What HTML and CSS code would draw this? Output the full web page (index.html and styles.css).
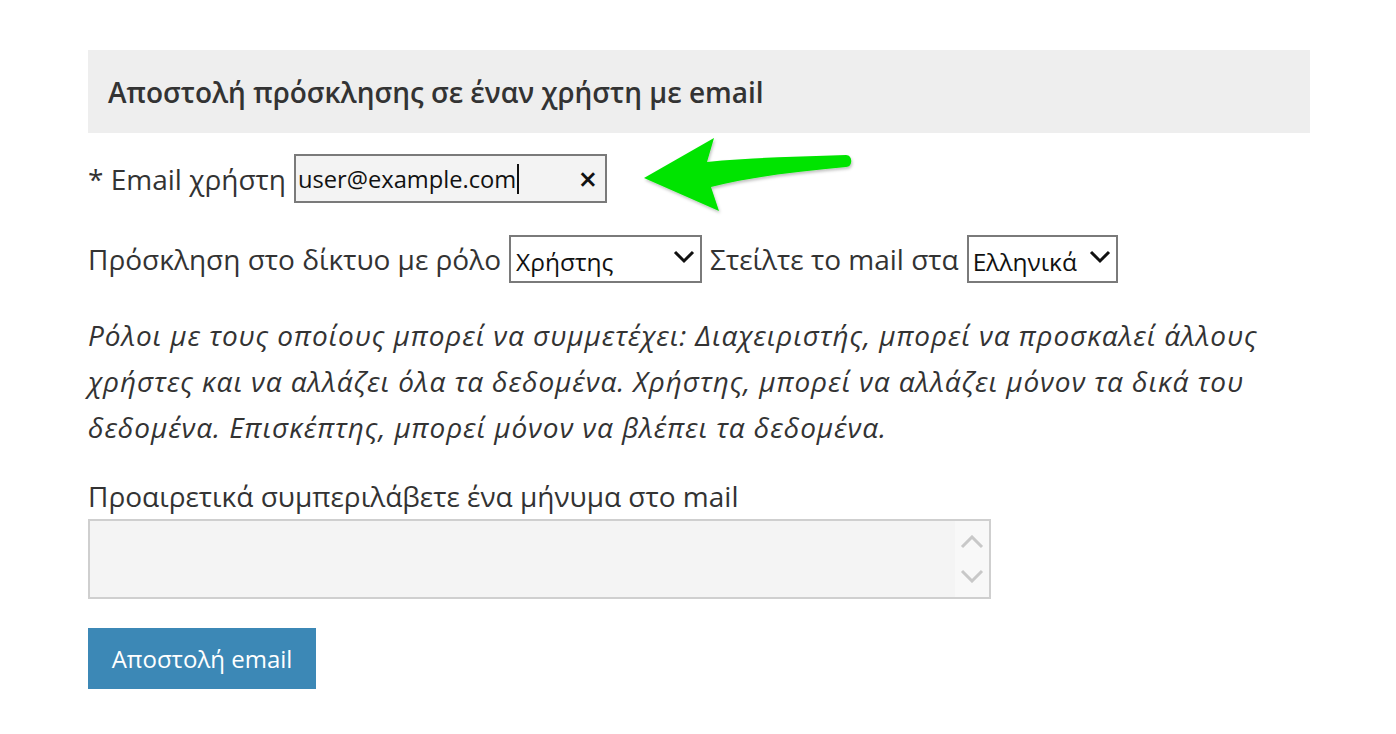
FILE: index.html
```html
<!DOCTYPE html>
<html lang="el">
<head>
<meta charset="utf-8">
<link rel="stylesheet" href="styles.css">
</head>
<body>
<div class="page">
  <div class="panel-head">Αποστολή πρόσκλησης σε έναν χρήστη με email</div>

  <div class="row email-row">
    <span class="label">* Email χρήστη</span>
    <div class="text-input">
      <span class="value">user@example.com</span><span class="caret"></span>
      <span class="clear">×</span>
    </div>
    <svg class="arrow" width="230" height="90" viewBox="0 0 230 90">
      <defs>
        <filter id="sh" x="-10%" y="-10%" width="120%" height="130%">
          <feDropShadow dx="1" dy="2" stdDeviation="1.5" flood-color="#000" flood-opacity="0.25"/>
        </filter>
      </defs>
      <path filter="url(#sh)" fill="#00e400" d="M3 43 L73 3 L66 27 C110 22 160 22 205 20 C212 20 212 32 205 32 C160 36 110 42 70 52 L78 76 Z"/>
    </svg>
  </div>

  <div class="row select-row">
    <span class="label">Πρόσκληση στο δίκτυο με ρόλο</span>
    <div class="select role">
      <span>Χρήστης</span>
      <svg class="chev" width="22" height="14" viewBox="0 0 22 14"><path d="M2 2 L11 11 L20 2" fill="none" stroke="#111" stroke-width="3"/></svg>
    </div>
    <span class="label">Στείλτε το mail στα</span>
    <div class="select lang">
      <span>Ελληνικά</span>
      <svg class="chev" width="22" height="14" viewBox="0 0 22 14"><path d="M2 2 L11 11 L20 2" fill="none" stroke="#111" stroke-width="3"/></svg>
    </div>
  </div>

  <p class="roles">Ρόλοι με τους οποίους μπορεί να συμμετέχει: Διαχειριστής, μπορεί να προσκαλεί άλλους χρήστες και να αλλάζει όλα τα δεδομένα. Χρήστης, μπορεί να αλλάζει μόνον τα δικά του δεδομένα. Επισκέπτης, μπορεί μόνον να βλέπει τα δεδομένα.</p>

  <div class="msg-label">Προαιρετικά συμπεριλάβετε ένα μήνυμα στο mail</div>
  <div class="textarea">
    <div class="spin">
      <svg width="26" height="14" viewBox="0 0 26 14"><path d="M3 12 L13 2 L23 12" fill="none" stroke="#c8c8c8" stroke-width="3"/></svg>
      <svg width="26" height="14" viewBox="0 0 26 14"><path d="M3 2 L13 12 L23 2" fill="none" stroke="#c8c8c8" stroke-width="3"/></svg>
    </div>
  </div>

  <button class="btn">Αποστολή email</button>
</div>
</body>
</html>
```
FILE: styles.css
```css
html, body {
  margin: 0;
  padding: 0;
  background: #fff;
}
body {
  font-family: "Open Sans", "Noto Sans", sans-serif;
  color: #333;
}
.page {
  width: 1222px;
  margin-left: 88px;
  padding-top: 50px;
}
.panel-head {
  background: #eeeeee;
  height: 83px;
  display: flex;
  align-items: center;
  padding-left: 20px;
  font-size: 28px;
  font-weight: 600;
  color: #333;
}
.row {
  display: flex;
  align-items: center;
  font-size: 28px;
}
.email-row {
  position: relative;
  margin-top: 21px;
  height: 49px;
}
.label {
  white-space: nowrap;
  margin-right: 8px;
}
.text-input {
  box-sizing: border-box;
  width: 313px;
  height: 49px;
  border: 2px solid #7a7a7a;
  background: #f3f3f3;
  display: flex;
  align-items: center;
  padding-left: 2px;
  font-size: 23.7px;
  color: #111;
  position: relative;
}
.caret {
  display: inline-block;
  width: 2px;
  height: 30px;
  background: #111;
  margin-left: 1px;
}
.clear {
  position: absolute;
  right: 8px;
  top: 50%;
  transform: translateY(-52%);
  font-size: 32px;
  color: #111;
  font-weight: 600;
}
.arrow {
  position: absolute;
  left: 553px;
  top: -19px;
}
.select-row {
  margin-top: 32px;
  height: 48px;
}
.select {
  box-sizing: border-box;
  height: 48px;
  border: 2px solid #7a7a7a;
  background: #fff;
  display: flex;
  align-items: center;
  justify-content: space-between;
  padding: 4px 5px 0 5px;
  font-size: 24.5px;
  color: #111;
  margin-right: 8px;
}
.select .chev {
  margin-top: -8px;
}
.select.role {
  width: 193px;
}
.select.lang {
  width: 151px;
  padding-left: 4px;
  padding-right: 5px;
}
.roles {
  margin: 29px 0 0 0;
  font-size: 28px;
  font-style: italic;
  letter-spacing: 0.9px;
  line-height: 46px;
  color: #333;
}
.msg-label {
  margin-top: 28px;
  font-size: 28px;
  line-height: 36px;
}
.textarea {
  box-sizing: border-box;
  margin-top: 5px;
  width: 903px;
  height: 80px;
  border: 2px solid #cfcfcf;
  background: #f4f4f4;
  display: flex;
  justify-content: flex-end;
}
.spin {
  width: 34px;
  background: #f8f8f8;
  display: flex;
  flex-direction: column;
  align-items: center;
  justify-content: center;
  gap: 20px;
}
.btn {
  display: block;
  margin-top: 29px;
  width: 228px;
  height: 61px;
  border: none;
  background: #3c88b6;
  color: #fff;
  font-family: "Open Sans", "Noto Sans", sans-serif;
  font-size: 24px;
  padding: 0;
}
```
